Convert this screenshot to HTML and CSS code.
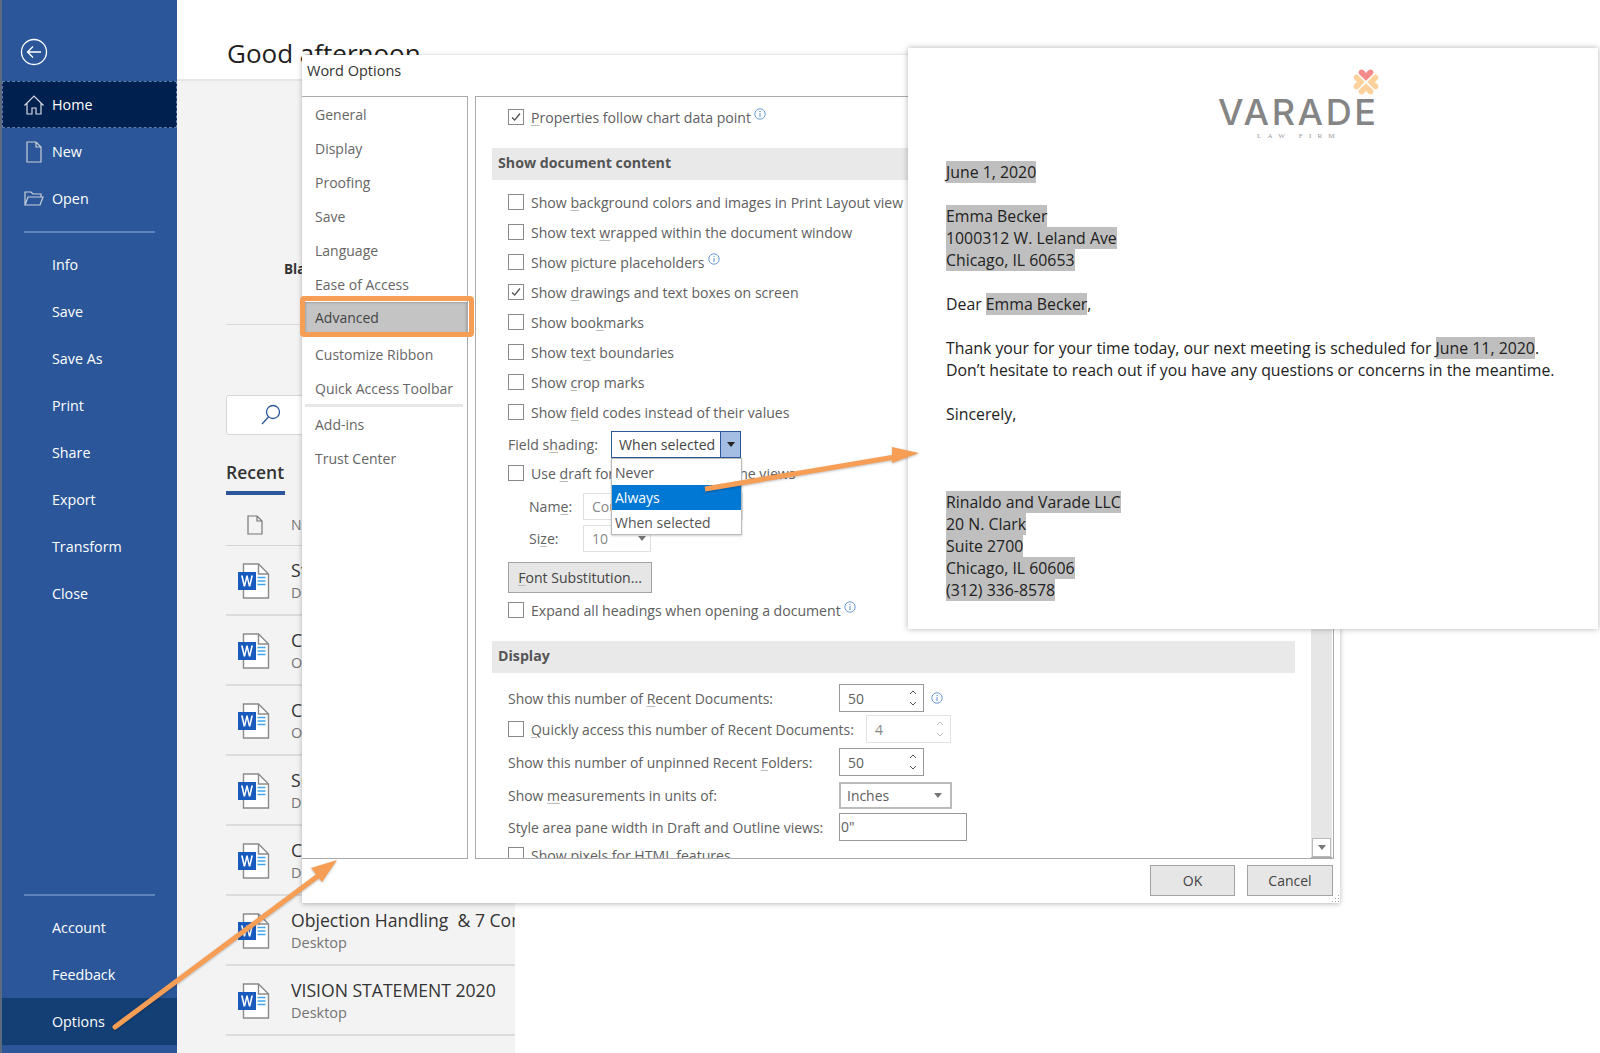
FILE: index.html
```html
<!DOCTYPE html>
<html lang="en">
<head>
<meta charset="utf-8">
<title>Word Options</title>
<link rel="stylesheet" href="styles.css">
</head>
<body>
<svg class="defs" width="0" height="0" aria-hidden="true">
  <symbol id="word" viewBox="0 0 32 36">
    <path d="M5.5 1h15l10 10v24h-25z" fill="#fff" stroke="#8a8a8a" stroke-width="1.4"/>
    <path d="M20.5 1v10h10" fill="none" stroke="#8a8a8a" stroke-width="1.4"/>
    <rect x="0" y="9" width="18" height="18" fill="#185abd"/>
    <path d="M3 12.5l2.6 11h1.6l1.8-7.5 1.8 7.5h1.6l2.6-11h-1.7l-1.8 8-1.8-8h-1.4l-1.8 8-1.8-8z" fill="#fff"/>
    <path d="M19.5 14.5h8M19.5 18h8M19.5 21.5h8" stroke="#41a5ee" stroke-width="1.4"/>
  </symbol>
  <symbol id="info" viewBox="0 0 12 12">
    <circle cx="6" cy="6" r="5.2" fill="none" stroke="#6b9bd8"/>
    <path d="M6 5v4M6 3v1.1" stroke="#5b8fd0" stroke-width="1"/>
  </symbol>
  <symbol id="check" viewBox="0 0 16 16">
    <path d="M3.5 8.5l3 3 6-7.5" fill="none" stroke="#555" stroke-width="1.6"/>
  </symbol>
  <symbol id="petal" viewBox="-16 -16 32 32">
    <path d="M0 -1.500L-7.500 -8.500Q-10 -11.500 -6.500 -14Q-3 -15 0 -10Q3 -15 6.500 -14Q10 -11.500 7.500 -8.500Z"/>
  </symbol>
</svg>

<div class="app">
  <nav class="side">
    <div class="back">
      <svg width="30" height="30" viewBox="0 0 30 30"><circle cx="15" cy="15" r="12.5" fill="none" stroke="#fff" stroke-width="1.3"/><path d="M22 15H8.5M14 9.5L8.5 15l5.5 5.5" fill="none" stroke="#fff" stroke-width="1.3"/></svg>
    </div>
    <a class="side-item home">
      <svg class="side-icon" width="22" height="22" viewBox="0 0 22 22"><path d="M1.5 11.5L11 2l9.500 9.500M4 9.500V20h5v-6h4v6h5V9.500" fill="none" stroke="#d5d9e2" stroke-width="1.200"/></svg>
      Home
    </a>
    <a class="side-item">
      <svg class="side-icon" width="22" height="22" viewBox="0 0 22 22"><path d="M4 1h9l5 5v15H4zM13 1v5h5" fill="none" stroke="#c9ced8" stroke-width="1.200"/></svg>
      New
    </a>
    <a class="side-item">
      <svg class="side-icon" width="22" height="22" viewBox="0 0 22 22"><path d="M2 17V4h6l2 2h8v3M2 17l3-8h15l-3 8z" fill="none" stroke="#c9ced8" stroke-width="1.200"/></svg>
      Open
    </a>
    <div class="side-rule"></div>
    <a class="side-item">Info</a>
    <a class="side-item">Save</a>
    <a class="side-item">Save As</a>
    <a class="side-item">Print</a>
    <a class="side-item">Share</a>
    <a class="side-item">Export</a>
    <a class="side-item">Transform</a>
    <a class="side-item">Close</a>
    <div class="side-spacer"></div>
    <div class="side-rule bottom-rule"></div>
    <a class="side-item">Account</a>
    <a class="side-item">Feedback</a>
    <a class="side-item options">Options</a>
  </nav>

  <main class="main">
    <header class="greeting"><h1>Good afternoon</h1></header>
    <section class="start">
      <div class="thumb"></div>
      <div class="thumb-label">Blank document</div>
      <div class="start-rule"></div>
      <div class="search">
        <svg width="24" height="24" viewBox="0 0 24 24"><circle cx="14" cy="9" r="6.500" fill="none" stroke="#2b579a" stroke-width="1.300"/><path d="M9.500 14L3 21" stroke="#2b579a" stroke-width="1.300"/></svg>
      </div>
      <div class="tabs"><span class="tab">Recent</span></div>
      <div class="list-head">
        <svg width="16" height="20" viewBox="0 0 16 20"><path d="M1 1h9l5 5v13H1zM10 1v5h5" fill="none" stroke="#777" stroke-width="1.200"/></svg>
        <span>Name</span>
      </div>
      <div class="doc-row"><svg class="word"><use href="#word"/></svg><div class="doc-text"><div class="doc-name">Staff Meeting</div><div class="doc-path">Desktop</div></div></div>
      <div class="doc-row"><svg class="word"><use href="#word"/></svg><div class="doc-text"><div class="doc-name">Client Letter</div><div class="doc-path">OneDrive</div></div></div>
      <div class="doc-row"><svg class="word"><use href="#word"/></svg><div class="doc-text"><div class="doc-name">Contract</div><div class="doc-path">OneDrive</div></div></div>
      <div class="doc-row"><svg class="word"><use href="#word"/></svg><div class="doc-text"><div class="doc-name">Summary</div><div class="doc-path">Desktop</div></div></div>
      <div class="doc-row"><svg class="word"><use href="#word"/></svg><div class="doc-text"><div class="doc-name">Cover Letter</div><div class="doc-path">Desktop</div></div></div>
      <div class="doc-row"><svg class="word"><use href="#word"/></svg><div class="doc-text"><div class="doc-name">Objection Handling &nbsp;&amp; 7 Common Objections</div><div class="doc-path">Desktop</div></div></div>
      <div class="doc-row"><svg class="word"><use href="#word"/></svg><div class="doc-text"><div class="doc-name">VISION STATEMENT 2020</div><div class="doc-path">Desktop</div></div></div>
    </section>
  </main>
</div>

<div class="dialog">
  <div class="dialog-title">Word Options</div>
  <div class="dialog-body">
    <ul class="opt-nav">
      <li>General</li>
      <li>Display</li>
      <li>Proofing</li>
      <li>Save</li>
      <li>Language</li>
      <li>Ease of Access</li>
      <li class="current">Advanced</li>
      <li class="after-current">Customize Ribbon</li>
      <li>Quick Access Toolbar</li>
      <li class="nav-rule" aria-hidden="true"></li>
      <li>Add-ins</li>
      <li>Trust Center</li>
    </ul>
    <div class="opt-panel">
      <div class="opt-scroll">
        <div class="row first"><span class="cb"><svg><use href="#check"/></svg></span><span><u>P</u>roperties follow chart data point</span><svg class="info"><use href="#info"/></svg></div>
        <div class="section doc-section">Show document content</div>
        <div class="row"><span class="cb"></span><span>Show <u>b</u>ackground colors and images in Print Layout view</span></div>
        <div class="row"><span class="cb"></span><span>Show text <u>w</u>rapped within the document window</span></div>
        <div class="row"><span class="cb"></span><span>Show <u>p</u>icture placeholders</span><svg class="info"><use href="#info"/></svg></div>
        <div class="row"><span class="cb"><svg><use href="#check"/></svg></span><span>Show <u>d</u>rawings and text boxes on screen</span></div>
        <div class="row"><span class="cb"></span><span>Show boo<u>k</u>marks</span></div>
        <div class="row"><span class="cb"></span><span>Show te<u>x</u>t boundaries</span></div>
        <div class="row"><span class="cb"></span><span>Show <u>c</u>rop marks</span></div>
        <div class="row"><span class="cb"></span><span>Show <u>f</u>ield codes instead of their values</span></div>
        <div class="row field-row"><span class="field-label">Field s<u>h</u>ading:</span><span class="combo"><span class="combo-text">When selected</span><span class="combo-btn"><i class="tri dark"></i></span></span></div>
        <div class="row draft-row"><span class="cb"></span><span>Use <u>d</u>raft font in Draft and Outline views</span></div>
        <div class="row sub-row name-row"><span class="sub-label">Nam<u>e</u>:</span><span class="soft-box name-box">Courier New</span></div>
        <div class="row sub-row size-row"><span class="sub-label">Si<u>z</u>e:</span><span class="soft-box size-box">10<i class="tri"></i></span></div>
        <div class="row btn-row"><span class="btn font-btn"><u>F</u>ont Substitution...</span></div>
        <div class="row expand-row"><span class="cb"></span><span>Expand all headings when opening a document</span><svg class="info"><use href="#info"/></svg></div>
        <div class="section disp-section">Display</div>
        <div class="row ctl-row"><span class="ctl-label">Show this number of <u>R</u>ecent Documents:</span><span class="spin"><span>50</span><span class="spin-arrows"><svg width="10" height="20" viewBox="0 0 10 20"><path d="M2 6l3-3 3 3M2 14l3 3 3-3" fill="none" stroke="#555"/></svg></span></span><svg class="info spaced"><use href="#info"/></svg></div>
        <div class="row ctl-row quick-row"><span class="cb"></span><span class="quick-label"><u>Q</u>uickly access this number of Recent Documents:</span><span class="spin disabled"><span>4</span><span class="spin-arrows"><svg width="10" height="20" viewBox="0 0 10 20"><path d="M2 6l3-3 3 3M2 14l3 3 3-3" fill="none" stroke="#bbb"/></svg></span></span></div>
        <div class="row ctl-row gap3"><span class="ctl-label">Show this number of unpinned Recent <u>F</u>olders:</span><span class="spin"><span>50</span><span class="spin-arrows"><svg width="10" height="20" viewBox="0 0 10 20"><path d="M2 6l3-3 3 3M2 14l3 3 3-3" fill="none" stroke="#555"/></svg></span></span></div>
        <div class="row ctl-row gap3"><span class="ctl-label">Show <u>m</u>easurements in units of:</span><span class="select">Inches<i class="tri"></i></span></div>
        <div class="row ctl-row gap2"><span class="ctl-label">Style area pane width in Draft and Outline views:</span><span class="text-in">0"</span></div>
        <div class="row clip-row"><span class="cb"></span><span>Show pixels for HTML features</span></div>
      </div>
      <div class="scrollbar"><span class="scroll-down"><i class="tri"></i></span></div>
    </div>
  </div>
  <div class="dialog-foot">
    <span class="btn foot-btn ok">OK</span>
    <span class="btn foot-btn cancel">Cancel</span>
  </div>
  <svg class="grip" width="9" height="9" viewBox="0 0 9 9" aria-hidden="true"><path d="M7 1h1v1H7zM4 4h1v1H4zM7 4h1v1H7zM1 7h1v1H1zM4 7h1v1H4zM7 7h1v1H7z" fill="#aaa"/></svg>
  <ul class="dropdown">
    <li>Never</li>
    <li class="selected">Always</li>
    <li>When selected</li>
  </ul>
  <div class="focus-ring"></div>
</div>

<article class="letter">
  <div class="logo">
    <svg class="logo-mark" width="28" height="28" viewBox="0 0 32 32">
      <use href="#petal" class="petal-peach" transform="rotate(90 16 16)"/>
      <use href="#petal" class="petal-peach" transform="rotate(180 16 16)"/>
      <use href="#petal" class="petal-peach" transform="rotate(270 16 16)"/>
      <use href="#petal" class="petal-pink"/>
    </svg>
    <div class="logo-name">VARADE</div>
    <div class="logo-sub">LAW FIRM</div>
  </div>
  <p><mark>June 1, 2020</mark></p>
  <p><mark>Emma Becker</mark><br><mark>1000312 W. Leland Ave</mark><br><mark>Chicago, IL 60653</mark></p>
  <p>Dear <mark>Emma Becker</mark>,</p>
  <p>Thank your for your time today, our next meeting is scheduled for <mark>June 11, 2020</mark>.<br>Don’t hesitate to reach out if you have any questions or concerns in the meantime.</p>
  <p class="sign">Sincerely,</p>
  <p><mark>Rinaldo and Varade LLC</mark><br><mark>20 N. Clark</mark><br><mark>Suite 2700</mark><br><mark>Chicago, IL 60606</mark><br><mark>(312) 336-8578</mark></p>
</article>

<svg class="arrows" width="1600" height="1053" viewBox="0 0 1600 1053" aria-hidden="true">
  <g fill="#f79e56">
    <path d="M115 1027L326 870" stroke="#f79e56" stroke-width="5" stroke-linecap="round"/>
    <path d="M337 860l-26 8 11 14z"/>
    <path d="M705 489L895 457" stroke="#f79e56" stroke-width="5"/>
    <path d="M919 453l-27-6v16z"/>
  </g>
</svg>
</body>
</html>
```

FILE: styles.css
```css
* { box-sizing: border-box; }
html, body { margin: 0; height: 100%; }
body {
  position: relative;
  width: 1600px;
  height: 1053px;
  overflow: hidden;
  background: #fff;
  font-family: "Open Sans", "Noto Sans", sans-serif;
  font-size: 14px;
  color: #555;
}
.defs { position: absolute; }
u { text-decoration-color: #bbb; text-underline-offset: 2px; }

/* backstage */
.app { display: flex; height: 1053px; }
.side {
  width: 177px;
  flex: none;
  display: flex;
  flex-direction: column;
  background: #2b579a;
  border-left: 2px solid #5d6a7e;
  color: #fff;
  padding-bottom: 8px;
}
.back { height: 81px; padding: 37px 0 0 17px; }
.side-item {
  height: 47px;
  flex: none;
  display: flex;
  align-items: center;
  padding-left: 50px;
  font-size: 14.300px;
  position: relative;
}
.side-icon { position: absolute; left: 21px; top: 13px; }
.home { background: #002050; outline: 1px dashed #5f7ba8; outline-offset: -1px; }
.options { background: #133f75; }
.side-rule { height: 2px; margin: 9px 22px 8px 22px; background: #5f84ba; flex: none; }
.side-spacer { flex: 1; }
.bottom-rule { margin-bottom: 8px; }

.main { width: 338px; flex: none; }
.greeting { height: 81px; width: 1000px; background: #fff; border-bottom: 2px solid #e6e6e6; padding: 34px 0 0 50px; position: relative; }
h1 { margin: 0; font-size: 26px; font-weight: 500; line-height: 38px; color: #1f1f1f; }
.start { height: 972px; padding-left: 49px; background: #f3f3f3; overflow: hidden; position: relative; }
.thumb { width: 116px; height: 114px; margin: 47px 0 0 118px; background: #fff; border: 1px solid #dcdcdc; }
.thumb-label { margin: 18px 0 0 58px; font-size: 13.500px; font-weight: 700; color: #333; white-space: nowrap; }
.start-rule { height: 1px; margin-top: 46px; background: #d9d9d9; }
.search { width: 300px; height: 40px; margin-top: 70px; background: #fff; border: 1px solid #d6d6d6; border-radius: 3px; padding: 7px 0 0 32px; }
.tabs { height: 59px; padding-top: 25px; }
.tab { display: inline-block; height: 35px; font-size: 17.500px; font-weight: 600; color: #333; border-bottom: 4px solid #2b579a; line-height: 24px; width: 59px; }
.list-head { height: 52px; display: flex; align-items: center; padding: 10px 0 0 21px; gap: 28px; border-bottom: 1px solid #d4d4d4; color: #777; }
.doc-row { height: 70px; display: flex; align-items: flex-start; border-bottom: 2px solid #dcdcdc; padding-top: 17px; }
.word { width: 32px; height: 36px; margin-left: 12px; flex: none; }
.doc-text { margin-left: 21px; white-space: nowrap; overflow: hidden; width: 224px; margin-top: -5px; }
.doc-name { font-size: 17.600px; line-height: 25px; color: #333; }
.doc-path { font-size: 14.500px; line-height: 20px; color: #757575; }

/* dialog */
.dialog {
  position: absolute;
  left: 302px;
  top: 55px;
  width: 1038px;
  height: 848px;
  background: #fff;
  box-shadow: 0 1px 5px rgba(0, 0, 0, .28);
}
.dialog-title { height: 41px; padding: 6px 0 0 5px; color: #333; font-size: 14.500px; }
.dialog-body { display: flex; height: 763px; gap: 7px; }
.opt-nav {
  list-style: none;
  margin: 0;
  padding: 1px 0 0 0;
  width: 166px;
  border: 1px solid #aaa;
  border-left: 0;
  flex: none;
}
.opt-nav li { height: 34px; line-height: 34px; padding-left: 13px; white-space: nowrap; color: #666; }
.opt-nav .current { background: #c4c4c4; color: #444; margin: 0 0 0 3px; padding-left: 10px; height: 32px; line-height: 32px; box-shadow: inset 0 0 3px rgba(0, 0, 0, .35); }
.opt-nav .after-current { margin-top: 4px; }
.opt-nav .nav-rule { height: 3px; margin: -2px 4px 1px 3px; background: #e8e8e8; padding: 0; }
.opt-panel { width: 859px; flex: none; border: 1px solid #aaa; display: flex; position: relative; overflow: hidden; }
.opt-scroll { flex: 1; padding: 5px 0 0 16px; min-width: 0; }
.scrollbar { width: 21px; background: #e6e6e6; display: flex; flex-direction: column; justify-content: flex-end; flex: none; margin-right: 1px; border-bottom: 1px solid #aaa; }
.scroll-down { height: 19px; background: #fff; border: 1px solid #bbb; margin: 0 1px; display: flex; align-items: center; justify-content: center; }

.row { height: 30px; display: flex; align-items: center; white-space: nowrap; color: #606060; position: relative; left: 16px; width: 800px; font-size: 14.080px; }
.first { margin-bottom: 16px; }
.cb { width: 16px; height: 16px; border: 1px solid #8a8a8a; background: #fff; flex: none; margin-right: 7px; display: block; }
.cb svg { display: block; width: 14px; height: 14px; }
.info { width: 12px; height: 12px; margin: -6px 0 0 3px; flex: none; }
.info.spaced { margin: 0 0 0 7px; }

.section { height: 32px; line-height: 30px; width: 803px; padding-left: 6px; background: #e9e9e9; font-weight: 700; font-size: 14.200px; color: #555; position: relative; }
.doc-section { margin-bottom: 7px; }
.disp-section { margin-top: 16px; margin-bottom: 10px; }
.field-row { margin-top: 3px; height: 29px; }
.field-label { width: 103px; flex: none; }
.combo { width: 130px; height: 27px; display: flex; border: 1px solid #2b579a; background: #fff; flex: none; }
.combo-text { flex: 1; padding-left: 7px; line-height: 25px; color: #444; }
.combo-btn { width: 20px; background: #a3bde3; border-left: 1px solid #2b579a; display: flex; align-items: center; justify-content: center; }
.tri { display: inline-block; width: 0; height: 0; border: 4px solid transparent; border-top: 5px solid #777; border-bottom: 0; }
.tri.dark { border-top-color: #222; }
.draft-row { height: 28px; }
.name-row { margin-top: 4px; }
.size-row { margin-top: 2px; }
.sub-label { width: 75px; padding-left: 21px; flex: none; }
.soft-box { height: 27px; border: 1px solid #e0e0e0; display: flex; align-items: center; padding-left: 8px; color: #888; }
.name-box { width: 160px; }
.size-box { width: 68px; justify-content: space-between; padding-right: 4px; }
.btn-row { margin-top: 9px; height: 31px; }
.btn { display: flex; align-items: center; justify-content: center; background: #e6e6e6; border: 1px solid #a3a3a3; color: #444; }
.font-btn { width: 144px; height: 31px; }
.expand-row { margin-top: 2px; }

.ctl-row { font-size: 13.950px; }
.ctl-label { width: 331px; flex: none; }
.quick-row { margin-top: 1px; }
.gap3 { margin-top: 3px; }
.gap2 { margin-top: 2px; }
.clip-row { margin-top: -2px; }
.quick-label { width: 335px; flex: none; }
.spin { width: 85px; height: 28px; border: 1px solid #999; display: flex; align-items: center; justify-content: space-between; padding: 0 5px 0 8px; background: #fff; flex: none; }
.spin-arrows { display: flex; }
.spin.disabled { border-color: #e2e2e2; color: #888; }
.select { width: 113px; height: 27px; border: 2px solid #bbb; display: flex; align-items: center; justify-content: space-between; padding: 0 8px 0 6px; }
.text-in { width: 128px; height: 28px; border: 1px solid #999; padding-left: 1px; line-height: 26px; }

.dialog-foot { display: flex; justify-content: flex-end; gap: 12px; padding: 6px 7px 0 0; }
.foot-btn { height: 31px; }
.ok { width: 85px; }
.cancel { width: 86px; }
.grip { position: absolute; right: 0; bottom: 0; }

.dropdown {
  position: absolute;
  left: 309px;
  top: 403px;
  width: 131px;
  height: 77px;
  margin: 0;
  padding: 1px 0 0 0;
  list-style: none;
  background: #fff;
  border: 1px solid #bbb;
  box-shadow: 0 1px 2px rgba(0, 0, 0, .2);
}
.dropdown li { height: 25px; line-height: 25px; padding-left: 3px; color: #555; }
.dropdown .selected { background: #0078d4; color: #fff; }
.focus-ring {
  position: absolute;
  left: -2px;
  top: 241px;
  width: 174px;
  height: 41px;
  border: 5px solid #f79e56;
  border-radius: 4px;
}

/* letter */
.letter {
  position: absolute;
  left: 908px;
  top: 48px;
  width: 690px;
  height: 581px;
  background: #fff;
  box-shadow: 0 0 6px rgba(0, 0, 0, .3);
  padding: 16px 0 0 38px;
  font-size: 15.850px;
  line-height: 22px;
  color: #222;
}
.letter p { margin: 0 0 22px; white-space: nowrap; }
.letter .sign { margin-bottom: 66px; }
mark { background: #bfbfbf; color: #222; }
.logo { position: relative; height: 97px; padding: 30px 0 0 272px; }
.logo-mark { position: absolute; left: 406px; top: 4px; }
.petal-pink { fill: #f58a8a; }
.petal-peach { fill: #fcd19c; }
.logo-name { font-family: Inter, sans-serif; font-weight: 500; font-size: 36px; line-height: 36px; color: #858585; width: 180px; letter-spacing: 2.600px; }
.logo-sub { font-family: "Liberation Serif", serif; font-size: 7px; line-height: 10px; letter-spacing: 6.200px; color: #9a9a9a; padding-left: 39px; margin-top: 1px; }

.arrows { position: absolute; left: 0; top: 0; pointer-events: none; filter: drop-shadow(0 1px 1px rgba(0, 0, 0, .25)); }
```
